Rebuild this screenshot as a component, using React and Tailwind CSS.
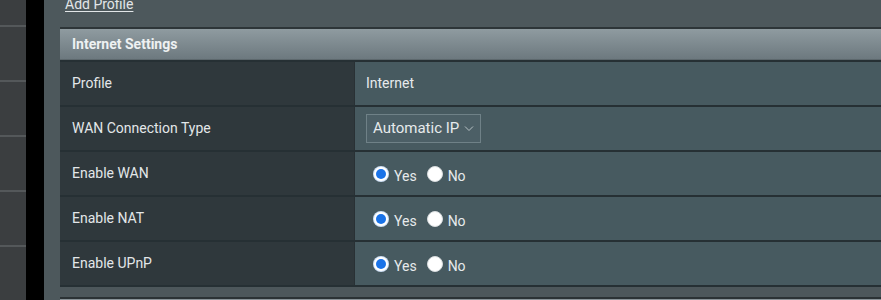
import React from "react";

const rows = [
  { label: "Profile", type: "text", value: "Internet" },
  { label: "WAN Connection Type", type: "select", value: "Automatic IP" },
  { label: "Enable WAN", type: "radio" },
  { label: "Enable NAT", type: "radio" },
  { label: "Enable UPnP", type: "radio" },
];

function Radio({ checked }) {
  if (checked) {
    return (
      <span className="flex shrink-0 items-center justify-center w-[16px] h-[16px] rounded-full bg-[#cfe0f5]">
        <span className="flex items-center justify-center w-[14px] h-[14px] rounded-full bg-white">
          <span className="block w-[10px] h-[10px] rounded-full bg-[#1a73e8]" />
        </span>
      </span>
    );
  }
  return <span className="block shrink-0 w-[16px] h-[16px] rounded-full bg-white border border-[#d8dcde]" />;
}

function Value({ row }) {
  if (row.type === "text") return <span>{row.value}</span>;
  if (row.type === "select") {
    return (
      <div className="flex items-center h-[29px] px-[6px] gap-[5px] border border-[#6f8187] bg-[#4c5f66] text-[15px] text-[#e6eaec]">
        <span>{row.value}</span>
        <svg width="10" height="7" viewBox="0 0 10 7" fill="none" stroke="#b8c2c6" strokeWidth="1">
          <path d="M1 1.5 L5 5.5 L9 1.5" />
        </svg>
      </div>
    );
  }
  return (
    <div className="flex items-center ml-[7px] text-[14px] text-[#e6eaec]">
      <Radio checked />
      <span className="ml-[5px] mt-[6px]">Yes</span>
      <span className="ml-[10px] flex"><Radio /></span>
      <span className="ml-[5px] mt-[6px]">No</span>
    </div>
  );
}

export default function App() {
  return (
    <div className="flex w-[881px] h-[300px] overflow-hidden bg-[#4d585c]" style={{ fontFamily: "Roboto, 'Liberation Sans', sans-serif" }}>
      {/* Sidebar */}
      <div className="w-[26px] shrink-0 bg-[#3b3e40] flex flex-col">
        {[0, 1, 2, 3, 4, 5].map((i) => (
          <div key={i} className={"shrink-0 border-b-2 border-[#54585a] " + (i === 0 ? "h-[27px]" : "h-[55px]")} />
        ))}
      </div>
      <div className="w-[18px] shrink-0 bg-black" />

      {/* Main */}
      <div className="flex-1 flex flex-col pl-[16px]">
        <div className="h-[27px] pl-[5px]">
          <a className="block mt-[-4px] text-[14px] leading-[16px] text-[#e2e6e8] underline underline-offset-2">Add Profile</a>
        </div>

        <div className="border-t-2 border-[#2d3538] bg-[#2d3538]">
          <div className="h-[31px] flex items-center pl-[12px] text-[14px] font-bold text-[#eef1f2] bg-gradient-to-b from-[#8f9ba0] to-[#6d797f] border-b border-[#5d686d]">
            Internet Settings
          </div>
          {rows.map((row) => (
            <div key={row.label} className="flex h-[45px] border-t-2 border-[#263034]">
              <div className="w-[295px] shrink-0 flex items-center pl-[12px] text-[14px] text-[#e3e7e9] bg-[#2f383c] border-r border-[#293135]">
                {row.label}
              </div>
              <div className="flex-1 flex items-center pl-[11px] text-[14px] text-[#e6eaec] bg-[#475a60]">
                <Value row={row} />
              </div>
            </div>
          ))}
          <div className="h-[2px] bg-[#263034]" />
        </div>

        <div className="h-[10px] bg-[#4d575b]" />
        <div className="h-[2px] bg-[#2b3235]" />
        <div className="flex-1 border-t border-[#8a9499] bg-[#3a4346]" />
      </div>
    </div>
  );
}
